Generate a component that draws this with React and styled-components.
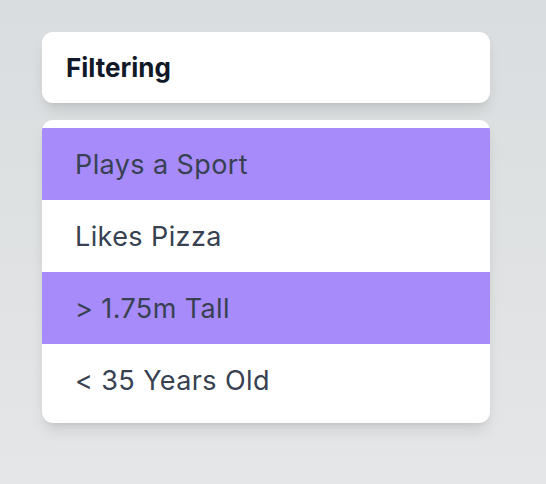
import React from 'react'
import styled, { createGlobalStyle } from 'styled-components'

const GlobalStyle = createGlobalStyle`
  html, body {
    margin: 0;
    padding: 0;
  }
  body {
    min-height: 484px;
    background: linear-gradient(180deg, #dadddf 0%, #e4e6e7 100%);
    font-family: Inter, "Noto Sans", sans-serif;
  }
`

const Page = styled.div`
  display: flex;
  flex-direction: column;
  gap: 17px;
  padding: 32px 0 0 42px;
  width: 448px;
`

const Card = styled.div`
  background: #ffffff;
  border-radius: 11px;
  box-shadow: 0 10px 15px -3px rgba(0, 0, 0, 0.1), 0 4px 6px -4px rgba(0, 0, 0, 0.1);
  overflow: hidden;
`

const Header = styled(Card)`
  height: 71px;
  display: flex;
  align-items: center;
  padding: 0 24px;
`

const Title = styled.h2`
  margin: 0;
  font-size: 26px;
  font-weight: 700;
  color: #111827;
`

const List = styled(Card)`
  display: flex;
  flex-direction: column;
  padding: 8px 0 7px;
`

const Option = styled.div`
  height: 72px;
  display: flex;
  align-items: center;
  padding: 0 33px;
  font-size: 27px;
  letter-spacing: 0.4px;
  color: #374151;
  background: ${p => (p.$active ? '#a78bfa' : 'transparent')};
`

const options = [
  { label: 'Plays a Sport', active: true },
  { label: 'Likes Pizza', active: false },
  { label: '> 1.75m Tall', active: true },
  { label: '< 35 Years Old', active: false }
]

export default function App () {
  return (
    <>
      <GlobalStyle />
      <Page>
        <Header>
          <Title>Filtering</Title>
        </Header>
        <List>
          {options.map(o => (
            <Option key={o.label} $active={o.active}>{o.label}</Option>
          ))}
        </List>
      </Page>
    </>
  )
}
